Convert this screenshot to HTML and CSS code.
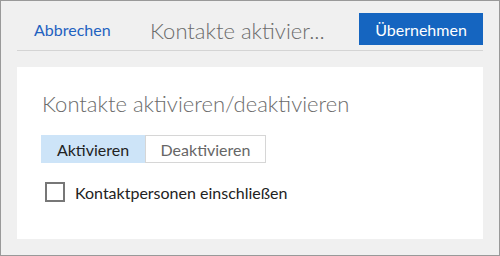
FILE: index.html
```html
<!DOCTYPE html>
<html lang="de">
<head>
<meta charset="utf-8">
<link rel="stylesheet" href="styles.css">
</head>
<body>
<div class="frame">
  <div class="header">
    <a class="cancel">Abbrechen</a>
    <div class="title">Kontakte aktivier...</div>
    <button class="apply">Übernehmen</button>
  </div>
  <div class="card">
    <h1 class="card-title">Kontakte aktivieren/deaktivieren</h1>
    <div class="tabs">
      <div class="tab active">Aktivieren</div>
      <div class="tab">Deaktivieren</div>
    </div>
    <label class="check">
      <span class="box"></span>
      <span class="label">Kontaktpersonen einschließen</span>
    </label>
  </div>
</div>
</body>
</html>
```
FILE: styles.css
```css
html, body {
  margin: 0;
  padding: 0;
}
body {
  font-family: Lato, "Open Sans", sans-serif;
  background: #f0f0f0;
}
.frame {
  box-sizing: border-box;
  width: 500px;
  height: 256px;
  border: 1px solid #999;
  background: #f0f0f0;
  padding: 0 16px;
}
.header {
  display: flex;
  align-items: center;
  height: 41px;
  padding-top: 8px;
  border-bottom: 1px solid #d4d4d4;
}
.cancel {
  color: #1f62c0;
  font-size: 16px;
  margin-left: 17px;
  width: 116px;
}
.title {
  flex: 1;
  color: #6b6b6b;
  font-size: 22px;
  font-weight: 300;
  margin-top: 2px;
}
.apply {
  height: 32px;
  width: 124px;
  margin-bottom: 1px;
  background: #1565c0;
  color: #fff;
  border: none;
  font-family: inherit;
  font-size: 16px;
  padding: 0;
}
.card {
  margin-top: 16px;
  background: #fff;
  height: 172px;
  box-sizing: border-box;
  padding: 22px 24px 0 24px;
}
.card-title {
  margin: 0 0 0 1px;
  font-size: 22px;
  font-weight: 300;
  color: #6b6b6b;
  line-height: 30px;
}
.tabs {
  display: flex;
  margin-top: 16px;
  height: 28px;
}
.tab {
  box-sizing: border-box;
  height: 28px;
  display: flex;
  align-items: center;
  justify-content: center;
  font-size: 16px;
  color: #666;
  border: 1px solid #d6d6d6;
  width: 121px;
}
.tab.active {
  width: 104px;
  background: #cde4f8;
  border-color: #cde4f8;
  color: #222;
}
.check {
  display: flex;
  align-items: center;
  margin-top: 19px;
  margin-left: 4px;
}
.box {
  box-sizing: border-box;
  width: 20px;
  height: 20px;
  border: 2px solid #777;
  margin-right: 10px;
}
.label {
  font-size: 16px;
  color: #222;
}
```
